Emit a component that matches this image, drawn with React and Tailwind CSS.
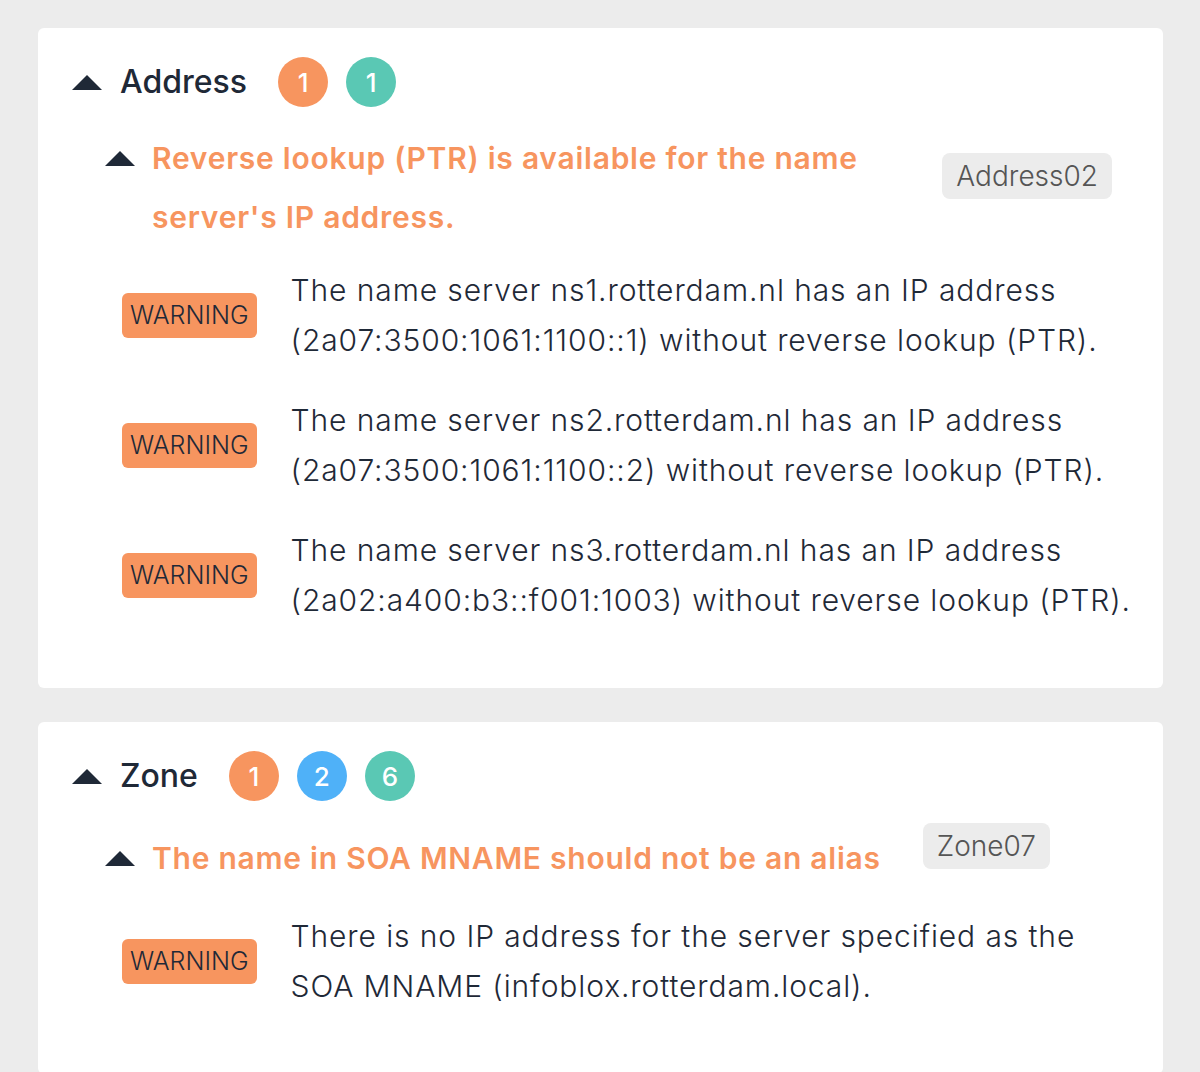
const ORANGE = 'bg-[#f7955f]';

const SECTIONS = [
  {
    title: 'Address',
    counts: [
      { n: 1, color: 'bg-[#f7955f]' },
      { n: 1, color: 'bg-[#5ac8b4]' },
    ],
    checks: [
      {
        title: "Reverse lookup (PTR) is available for the name server's IP address.",
        tag: 'Address02',
        messages: [
          'The name server ns1.rotterdam.nl has an IP address (2a07:3500:1061:1100::1) without reverse lookup (PTR).',
          'The name server ns2.rotterdam.nl has an IP address (2a07:3500:1061:1100::2) without reverse lookup (PTR).',
          'The name server ns3.rotterdam.nl has an IP address (2a02:a400:b3::f001:1003) without reverse lookup (PTR).',
        ],
      },
    ],
  },
  {
    title: 'Zone',
    counts: [
      { n: 1, color: 'bg-[#f7955f]' },
      { n: 2, color: 'bg-[#4fb1f8]' },
      { n: 6, color: 'bg-[#5ac8b4]' },
    ],
    checks: [
      {
        title: 'The name in SOA MNAME should not be an alias',
        tag: 'Zone07',
        messages: [
          'There is no IP address for the server specified as the SOA MNAME (infoblox.rotterdam.local).',
        ],
      },
    ],
  },
];

function Caret() {
  return (
    <svg width="30" height="15" viewBox="0 0 30 15" className="shrink-0">
      <path d="M15 0 L30 15 L0 15 Z" fill="#1f2937" />
    </svg>
  );
}

function Check({ check }) {
  return (
    <div>
      <div className="flex items-center pl-[67px] pr-[51px]">
        <div className="flex items-start gap-[17px]">
          <div className="flex h-[59px] items-center">
            <Caret />
          </div>
          <h3 className="max-w-[749px] text-[30px] font-semibold leading-[59px] tracking-[0.75px] text-[#f7955f]">
            {check.title}
          </h3>
        </div>
        <span className="mb-[24px] ml-[42px] shrink-0 rounded-lg bg-[#ececec] px-[14px] text-[28px] font-light leading-[46px] text-[#555]">
          {check.tag}
        </span>
      </div>
      <div className="mt-[18px] flex flex-col gap-[30px] pl-[84px] pr-[23px]">
        {check.messages.map((m, i) => (
          <div key={i} className="flex items-center gap-[34px]">
            <span className={`${ORANGE} shrink-0 rounded-md px-[8px] text-[25px] font-light leading-[45px] text-[#1f2937]`}>
              WARNING
            </span>
            <p className="text-[30px] font-light leading-[50px] tracking-[0.9px] text-[#1f2937]">{m}</p>
          </div>
        ))}
      </div>
    </div>
  );
}

function Section({ section }) {
  return (
    <div className="rounded-md bg-white pb-[63px] pt-[29px]">
      <div className="flex items-center pl-[34px]">
        <Caret />
        <h2 className="ml-[18px] text-[32px] font-medium text-[#1f2937]">{section.title}</h2>
        <div className="ml-[31px] flex gap-[18px]">
          {section.counts.map((c, i) => (
            <span
              key={i}
              className={`${c.color} flex h-[50px] w-[50px] items-center justify-center rounded-full text-[26px] font-medium text-white`}
            >
              {c.n}
            </span>
          ))}
        </div>
      </div>
      <div className="mt-[22px]">
        {section.checks.map((ch, i) => (
          <Check key={i} check={ch} />
        ))}
      </div>
    </div>
  );
}

export default function App() {
  return (
    <div
      className="min-h-screen bg-[#ececec] pl-[38px] pr-[37px] pt-[28px]"
      style={{ fontFamily: 'Inter, "Noto Sans", sans-serif' }}
    >
      <div className="flex flex-col gap-[34px]">
        {SECTIONS.map((s) => (
          <Section key={s.title} section={s} />
        ))}
      </div>
    </div>
  );
}
